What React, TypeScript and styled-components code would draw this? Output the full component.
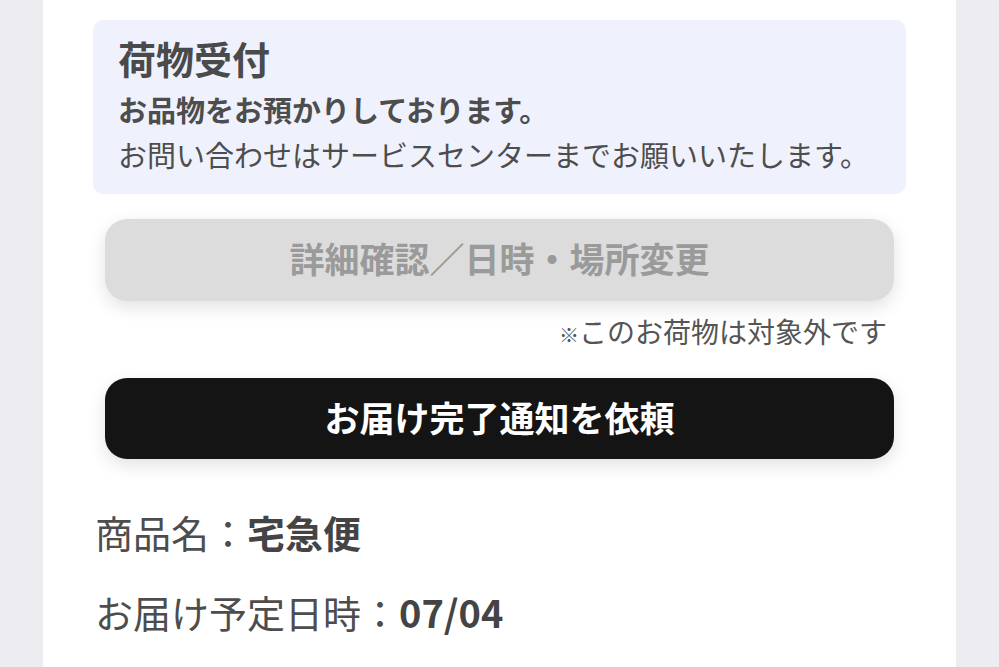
import styled, { createGlobalStyle } from "styled-components";

const GlobalStyle = createGlobalStyle`
    html, body {
        margin: 0;
        padding: 0;
        background: #ececf1;
        font-family: "Noto Sans CJK JP", "Noto Sans", sans-serif;
        color: #4a4a4a;
    }
`;

const Page = styled.div`
    width: 913px;
    min-height: 100vh;
    margin: 0 auto;
    background: #ffffff;
    padding: 20px 50px 0;
    box-sizing: border-box;
    display: flex;
    flex-direction: column;
`;

const StatusBox = styled.div`
    background: #eff2fc;
    border-radius: 10px;
    padding: 14px 25px 17px;
`;

const StatusTitle = styled.h2`
    margin: 0 0 5px;
    font-size: 38px;
    line-height: 48px;
    font-weight: 700;
    color: #4a4a4a;
`;

const StatusLine = styled.p<{ $bold?: boolean }>`
    margin: 0;
    font-size: 29px;
    line-height: 45px;
    font-weight: ${(p) => (p.$bold ? 700 : 400)};
    color: #4d4d4d;
    white-space: nowrap;
`;

const ActionButton = styled.button<{ $disabled?: boolean }>`
    margin: 25px 12px 0;
    height: 82px;
    padding: 0 0 5px;
    border: none;
    border-radius: 22px;
    background: ${(p) => (p.$disabled ? "#dcdcdc" : "#141414")};
    color: ${(p) => (p.$disabled ? "#9a9a9a" : "#ffffff")};
    font-family: inherit;
    font-size: 35px;
    font-weight: 700;
    box-shadow: 0 6px 18px rgba(0, 0, 0, 0.12);
    cursor: ${(p) => (p.$disabled ? "default" : "pointer")};
`;

const Note = styled.div`
    margin: 10px 19px 0 0;
    height: 40px;
    text-align: right;
    font-size: 28px;
    line-height: 40px;
    color: #555555;

    small {
        font-size: 20px;
        line-height: 1;
    }
`;

const InfoList = styled.div`
    margin-top: 33px;
    padding-left: 2px;
`;

const InfoRow = styled.div`
    font-size: 38px;
    line-height: 80px;
    color: #4d4d4d;
    white-space: nowrap;

    strong {
        font-weight: 700;
        color: #444444;
    }
`;

const App = () => {
    return (
        <>
            <GlobalStyle />
            <Page>
                <StatusBox>
                    <StatusTitle>荷物受付</StatusTitle>
                    <StatusLine $bold>お品物をお預かりしております。</StatusLine>
                    <StatusLine>お問い合わせはサービスセンターまでお願いいたします。</StatusLine>
                </StatusBox>

                <ActionButton $disabled disabled>
                    詳細確認／日時・場所変更
                </ActionButton>
                <Note>
                    <small>※</small>このお荷物は対象外です
                </Note>

                <ActionButton style={{ marginTop: 27, height: 81 }}>
                    お届け完了通知を依頼
                </ActionButton>

                <InfoList>
                    <InfoRow>
                        商品名：<strong>宅急便</strong>
                    </InfoRow>
                    <InfoRow>
                        お届け予定日時：<strong>07/04</strong>
                    </InfoRow>
                </InfoList>
            </Page>
        </>
    );
};

export default App;
